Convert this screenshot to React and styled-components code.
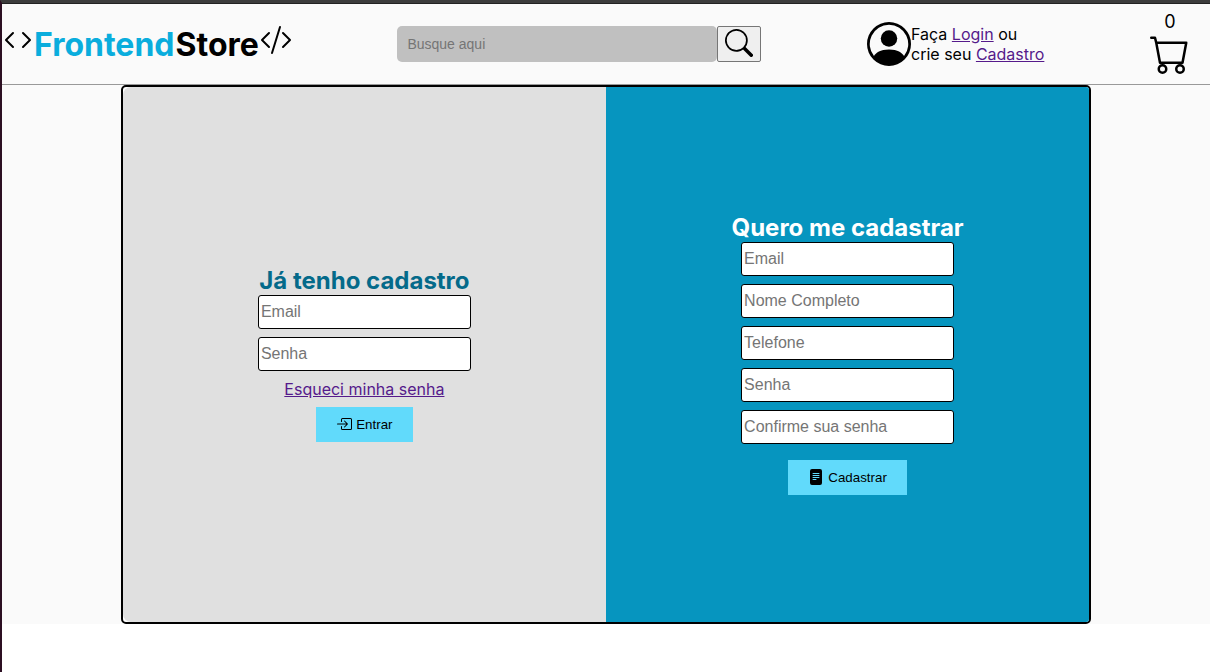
import React from "react";
import styled, { createGlobalStyle } from "styled-components";
import {
  BsBoxArrowInRight,
  BsCart,
  BsCode,
  BsCodeSlash,
  BsFileTextFill,
  BsPersonCircle,
  BsSearch,
} from "react-icons/bs";

const GlobalStyle = createGlobalStyle`
  * {
    margin: 0;
    padding: 0;
    box-sizing: border-box;
  }

  body {
    background: #ffffff;
    color: #000000;
    font-family: Inter, "Liberation Sans", sans-serif;
    font-size: 16px;
    line-height: 20px;
  }

  input,
  button {
    font-family: "Liberation Sans", Arial, sans-serif;
  }

  svg {
    flex-shrink: 0;
  }
`;

const Page = styled.div`
  min-height: 100vh;
  border-top: 3px solid #3c3c3c;
  border-left: 2px solid #2c0f22;
`;

const Header = styled.header`
  display: flex;
  align-items: center;
  justify-content: space-between;
  min-height: 82px;
  padding-right: 20px;
  background: #fafafa;
  border-top: 1px solid #222222;
  border-bottom: 1px solid #999999;
`;

const Logo = styled.h1`
  display: flex;
  align-items: center;
  padding-top: 2px;
  font-size: 32px;
  line-height: 40px;
`;

const LogoIcon = styled.span`
  display: flex;
  padding-bottom: 10px;
`;

const LogoText = styled.span`
  padding-right: 1px;
  color: ${({ $color }) => $color};
`;

const SearchForm = styled.form`
  display: flex;
`;

const SearchInput = styled.input`
  width: 320px;
  height: 36px;
  padding: 0 10px;
  border: none;
  border-radius: 5px;
  background: #c0c0c0;
  font-size: 14px;

  &::placeholder {
    color: #757575;
  }
`;

const SearchButton = styled.button`
  display: flex;
  justify-content: center;
  width: 44px;
  height: 36px;
  padding-top: 2px;
  border: 1px solid #767676;
  border-radius: 2px;
  background: #efefef;
  color: #000000;
`;

const Account = styled.div`
  display: flex;
  align-items: center;
  padding-bottom: 1px;
`;

const TextLink = styled.a`
  color: #551a8b;
`;

const Cart = styled.div`
  display: flex;
  flex-direction: column;
  align-items: center;
  gap: 4px;
`;

const CartCount = styled.span`
  font-size: 18px;
  line-height: 16px;
`;

const Main = styled.main`
  display: flex;
  justify-content: center;
  background: #fafafa;
`;

const Panels = styled.div`
  display: grid;
  grid-template-columns: 1fr 1fr;
  box-sizing: content-box;
  width: 80%;
  min-height: 535px;
  border: 2px solid #000000;
  border-radius: 5px;
  background: #ffffff;
`;

const Panel = styled.section`
  display: flex;
  align-items: center;
  justify-content: center;
  padding-bottom: 2px;
  border-radius: ${({ $radius }) => $radius};
  background: ${({ $background }) => $background};
`;

const Form = styled.form`
  display: flex;
  flex-direction: column;
  align-items: center;
`;

const Title = styled.h2`
  color: ${({ $color }) => $color};
  font-size: 24px;
  line-height: 29px;
`;

const Fields = styled.div`
  display: flex;
  flex-direction: column;
  gap: 8px;
  margin-bottom: 8px;
`;

const Field = styled.input`
  width: 213px;
  height: 34px;
  padding: 1px 2px;
  border: 1px solid #000000;
  border-radius: 3px;
  background: #ffffff;
  font-size: 16px;

  &::placeholder {
    color: #757575;
  }
`;

const SubmitButton = styled.button`
  display: flex;
  align-items: center;
  gap: 4px;
  height: 35px;
  margin-top: 8px;
  padding: 0 20px;
  border: none;
  background: #61dafb;
  color: #000000;
`;

const loginFields = [
  { label: "Email", type: "email" },
  { label: "Senha", type: "password" },
];

const signupFields = [
  { label: "Email", type: "email" },
  { label: "Nome Completo", type: "text" },
  { label: "Telefone", type: "tel" },
  { label: "Senha", type: "password" },
  { label: "Confirme sua senha", type: "password" },
];

function FieldList({ fields }) {
  return (
    <Fields>
      {fields.map(({ label, type }) => (
        <Field key={label} type={type} placeholder={label} aria-label={label} />
      ))}
    </Fields>
  );
}

export default function App() {
  return (
    <Page>
      <GlobalStyle />
      <Header>
        <Logo>
          <LogoIcon>
            <BsCode size={32} />
          </LogoIcon>
          <LogoText $color="#0aaddd">Frontend</LogoText>
          <LogoText $color="#000000">Store</LogoText>
          <LogoIcon>
            <BsCodeSlash size={32} />
          </LogoIcon>
        </Logo>
        <SearchForm>
          <SearchInput type="search" placeholder="Busque aqui" aria-label="Busque aqui" />
          <SearchButton type="button" aria-label="Buscar">
            <BsSearch size={28} />
          </SearchButton>
        </SearchForm>
        <Account>
          <BsPersonCircle size={44} />
          <p>
            Faça <TextLink href="#login">Login</TextLink> ou
            <br />
            crie seu <TextLink href="#cadastro">Cadastro</TextLink>
          </p>
        </Account>
        <Cart>
          <CartCount>0</CartCount>
          <BsCart size={40} />
        </Cart>
      </Header>
      <Main>
        <Panels>
          <Panel id="login" $background="#e0e0e0" $radius="8px 0 0 8px">
            <Form>
              <Title $color="#046a8a">Já tenho cadastro</Title>
              <FieldList fields={loginFields} />
              <TextLink href="#senha">Esqueci minha senha</TextLink>
              <SubmitButton type="button">
                <BsBoxArrowInRight size={16} />
                Entrar
              </SubmitButton>
            </Form>
          </Panel>
          <Panel id="cadastro" $background="#0695bf" $radius="0 3px 3px 0">
            <Form>
              <Title $color="#ffffff">Quero me cadastrar</Title>
              <FieldList fields={signupFields} />
              <SubmitButton type="button">
                <BsFileTextFill size={16} />
                Cadastrar
              </SubmitButton>
            </Form>
          </Panel>
        </Panels>
      </Main>
    </Page>
  );
}
